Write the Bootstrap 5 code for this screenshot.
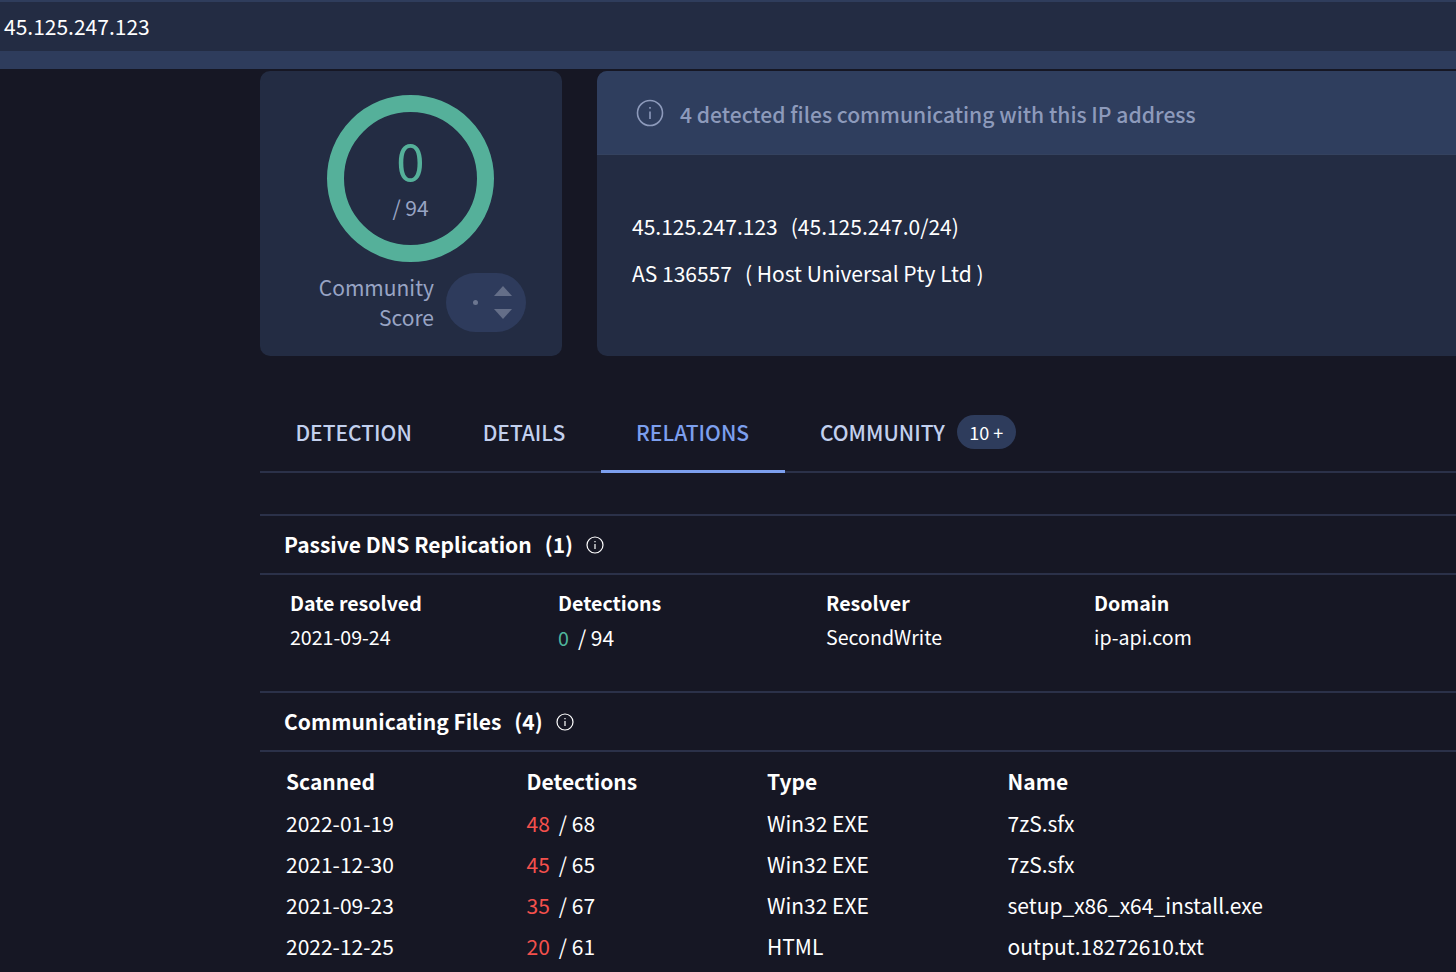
<!DOCTYPE html>
<html lang="en">
<head>
<meta charset="utf-8">
<title>45.125.247.123</title>
<link rel="stylesheet" href="https://cdn.jsdelivr.net/npm/bootstrap@5.3.0/dist/css/bootstrap.min.css">
<style>
html, body { height: 972px; overflow: hidden; }
body { background: #161724; color: #fff; font-family: "Noto Sans CJK JP", "Noto Sans", sans-serif; font-size: 21px; line-height: 1.3; }
.topline { height: 2px; background: #2f3d5c; }
.ipbar { height: 49px; background: #232c43; padding-left: 4px; font-size: 21px; }
.subbar { height: 18px; background: #2e3c5c; margin-bottom: 2px; }
.page { padding-left: 260px; }
.overview { height: 285px; gap: 35px; margin-right: -30px; }
.panel { background: #232c43; border-radius: 10px; overflow: hidden; }
.scorecard { width: 302px; flex: none; padding-top: 24px; }
.ring { width: 167px; height: 167px; border: 17px solid #55b09a; border-radius: 50%; padding: 22px 0 0 1px; margin-right: 2px; }
.ring-num { color: #55b09a; font-size: 51px; line-height: 1; font-weight: 400; }
.ring-of { color: #98a4c4; font-size: 21px; line-height: 1; margin-top: 12px; }
.score-row { margin-top: 11px; padding-left: 37px; gap: 12px; }
.score-label { color: #98a4c4; font-size: 21px; line-height: 30px; text-align: right; width: 137px; margin-top: -1px; }
.voter { width: 80px; height: 59px; border-radius: 30px; background: #2e3b5c; padding: 0 14px 0 27px; }
.dot { width: 5px; height: 5px; border-radius: 50%; background: #6c7690; }
.arrows { gap: 13px; }
.infocard { flex: 1 1 0; }
.alertbar { height: 84px; background: #2f3e5e; padding-left: 39px; color: #8d9abb; gap: 16px; font-weight: 500; font-size: 21.1px; border-bottom: 1px solid #34425f; }
.alertbar span { padding-top: 4px; }
.infobody { padding: 48px 35px; font-size: 21px; line-height: 47px; }
.gapword { margin-left: 13px; }
.tabsrow { height: 117px; border-bottom: 2px solid #2b3149; padding-top: 42px; }
.tabitem { color: #c2d0ee; padding: 14px 35.4px 0; height: 75px; font-weight: 500; font-size: 21px; line-height: 40px; margin-bottom: -2px; }
.tabitem.on { color: #7c9fee; border-bottom: 3px solid #7c9fee; }
.pill-count { background: #2e3c5c; color: #fff; font-size: 18px; padding: 0 12.5px; height: 34px; line-height: 34px; border-radius: 17px; margin-left: 12px; display: inline-block; vertical-align: 1px; font-weight: 400; }
.sectionhead { height: 61px; border-top: 2px solid #2b3149; border-bottom: 2px solid #2b3149; padding-left: 24px; gap: 13px; font-weight: 700; font-size: 21px; }
.first { margin-top: 41px; }
.second { margin-top: 33px; }
.datagrid { margin-top: 15px; width: 1072px; margin-left: 30px; table-layout: fixed; }
.datagrid th, .datagrid td { background: transparent; color: #fff; border: 0; padding: 0; font-size: 19.6px; font-weight: 400; }
.datagrid th { font-weight: 700; height: 34px; }
.datagrid td { height: 34px; }
.datagrid .sl { margin-left: 9px; font-size: 21px; }
.filegrid { margin-top: 16px; width: 962px; margin-left: 26px; table-layout: fixed; }
.filegrid th, .filegrid td { background: transparent; color: #fff; border: 0; padding: 0; font-size: 21px; font-weight: 400; height: 41px; }
.filegrid th { font-weight: 700; height: 42px; }
.clean { color: #4fb59c; }
.bad { color: #f4504c; }
.sl { margin-left: 9px; }
</style>
</head>
<body>
<div class="topline"></div>
<div class="ipbar d-flex align-items-center"><span>45.125.247.123</span></div>
<div class="subbar"></div>
<div class="page">
  <div class="overview d-flex">
    <div class="panel scorecard d-flex flex-column align-items-center">
      <div class="ring d-flex flex-column align-items-center flex-shrink-0">
        <div class="ring-num">0</div>
        <div class="ring-of">/ 94</div>
      </div>
      <div class="score-row d-flex align-items-center w-100">
        <div class="score-label">Community Score</div>
        <div class="voter d-flex align-items-center justify-content-between">
          <span class="dot"></span>
          <span class="arrows d-flex flex-column">
            <svg width="18" height="10" viewBox="0 0 18 10"><path d="M9 0L18 10H0Z" fill="#646e88"/></svg>
            <svg width="18" height="10" viewBox="0 0 18 10"><path d="M0 0H18L9 10Z" fill="#646e88"/></svg>
          </span>
        </div>
      </div>
    </div>
    <div class="panel infocard">
      <div class="alertbar d-flex align-items-center">
        <svg width="28" height="28" viewBox="0 0 28 28" fill="none" stroke="#8d9abb" stroke-width="1.6"><circle cx="14" cy="14" r="12.5"/><path d="M14 12.5V20M14 8v1.8"/></svg>
        <span>4 detected files communicating with this IP address</span>
      </div>
      <div class="infobody">
        <div>45.125.247.123<span class="gapword">(45.125.247.0/24)</span></div>
        <div>AS 136557<span class="gapword">( Host Universal Pty Ltd )</span></div>
      </div>
    </div>
  </div>

  <div class="tabsrow d-flex">
    <div class="tabitem">DETECTION</div>
    <div class="tabitem">DETAILS</div>
    <div class="tabitem on">RELATIONS</div>
    <div class="tabitem">COMMUNITY<span class="pill-count">10 +</span></div>
  </div>

  <div class="sectionhead first d-flex align-items-center">
    <span>Passive DNS Replication<span class="gapword">(1)</span></span>
    <svg width="18" height="18" viewBox="0 0 18 18" fill="none" stroke="#fff" stroke-width="1.2"><circle cx="9" cy="9" r="8"/><path d="M9 8v5M9 5v1.3"/></svg>
  </div>
  <table class="table datagrid mb-0">
    <tr><th>Date resolved</th><th>Detections</th><th>Resolver</th><th>Domain</th></tr>
    <tr><td>2021-09-24</td><td><span class="clean">0</span><span class="sl">/ 94</span></td><td>SecondWrite</td><td>ip-api.com</td></tr>
  </table>

  <div class="sectionhead second d-flex align-items-center">
    <span>Communicating Files<span class="gapword">(4)</span></span>
    <svg width="18" height="18" viewBox="0 0 18 18" fill="none" stroke="#fff" stroke-width="1.2"><circle cx="9" cy="9" r="8"/><path d="M9 8v5M9 5v1.3"/></svg>
  </div>
  <table class="table filegrid mb-0">
    <tr><th>Scanned</th><th>Detections</th><th>Type</th><th>Name</th></tr>
    <tr><td>2022-01-19</td><td><span class="bad">48</span><span class="sl">/ 68</span></td><td>Win32 EXE</td><td>7zS.sfx</td></tr>
    <tr><td>2021-12-30</td><td><span class="bad">45</span><span class="sl">/ 65</span></td><td>Win32 EXE</td><td>7zS.sfx</td></tr>
    <tr><td>2021-09-23</td><td><span class="bad">35</span><span class="sl">/ 67</span></td><td>Win32 EXE</td><td>setup_x86_x64_install.exe</td></tr>
    <tr><td>2022-12-25</td><td><span class="bad">20</span><span class="sl">/ 61</span></td><td>HTML</td><td>output.18272610.txt</td></tr>
  </table>
</div>
<script src="https://cdn.jsdelivr.net/npm/bootstrap@5.3.0/dist/js/bootstrap.bundle.min.js"></script>
</body>
</html>
